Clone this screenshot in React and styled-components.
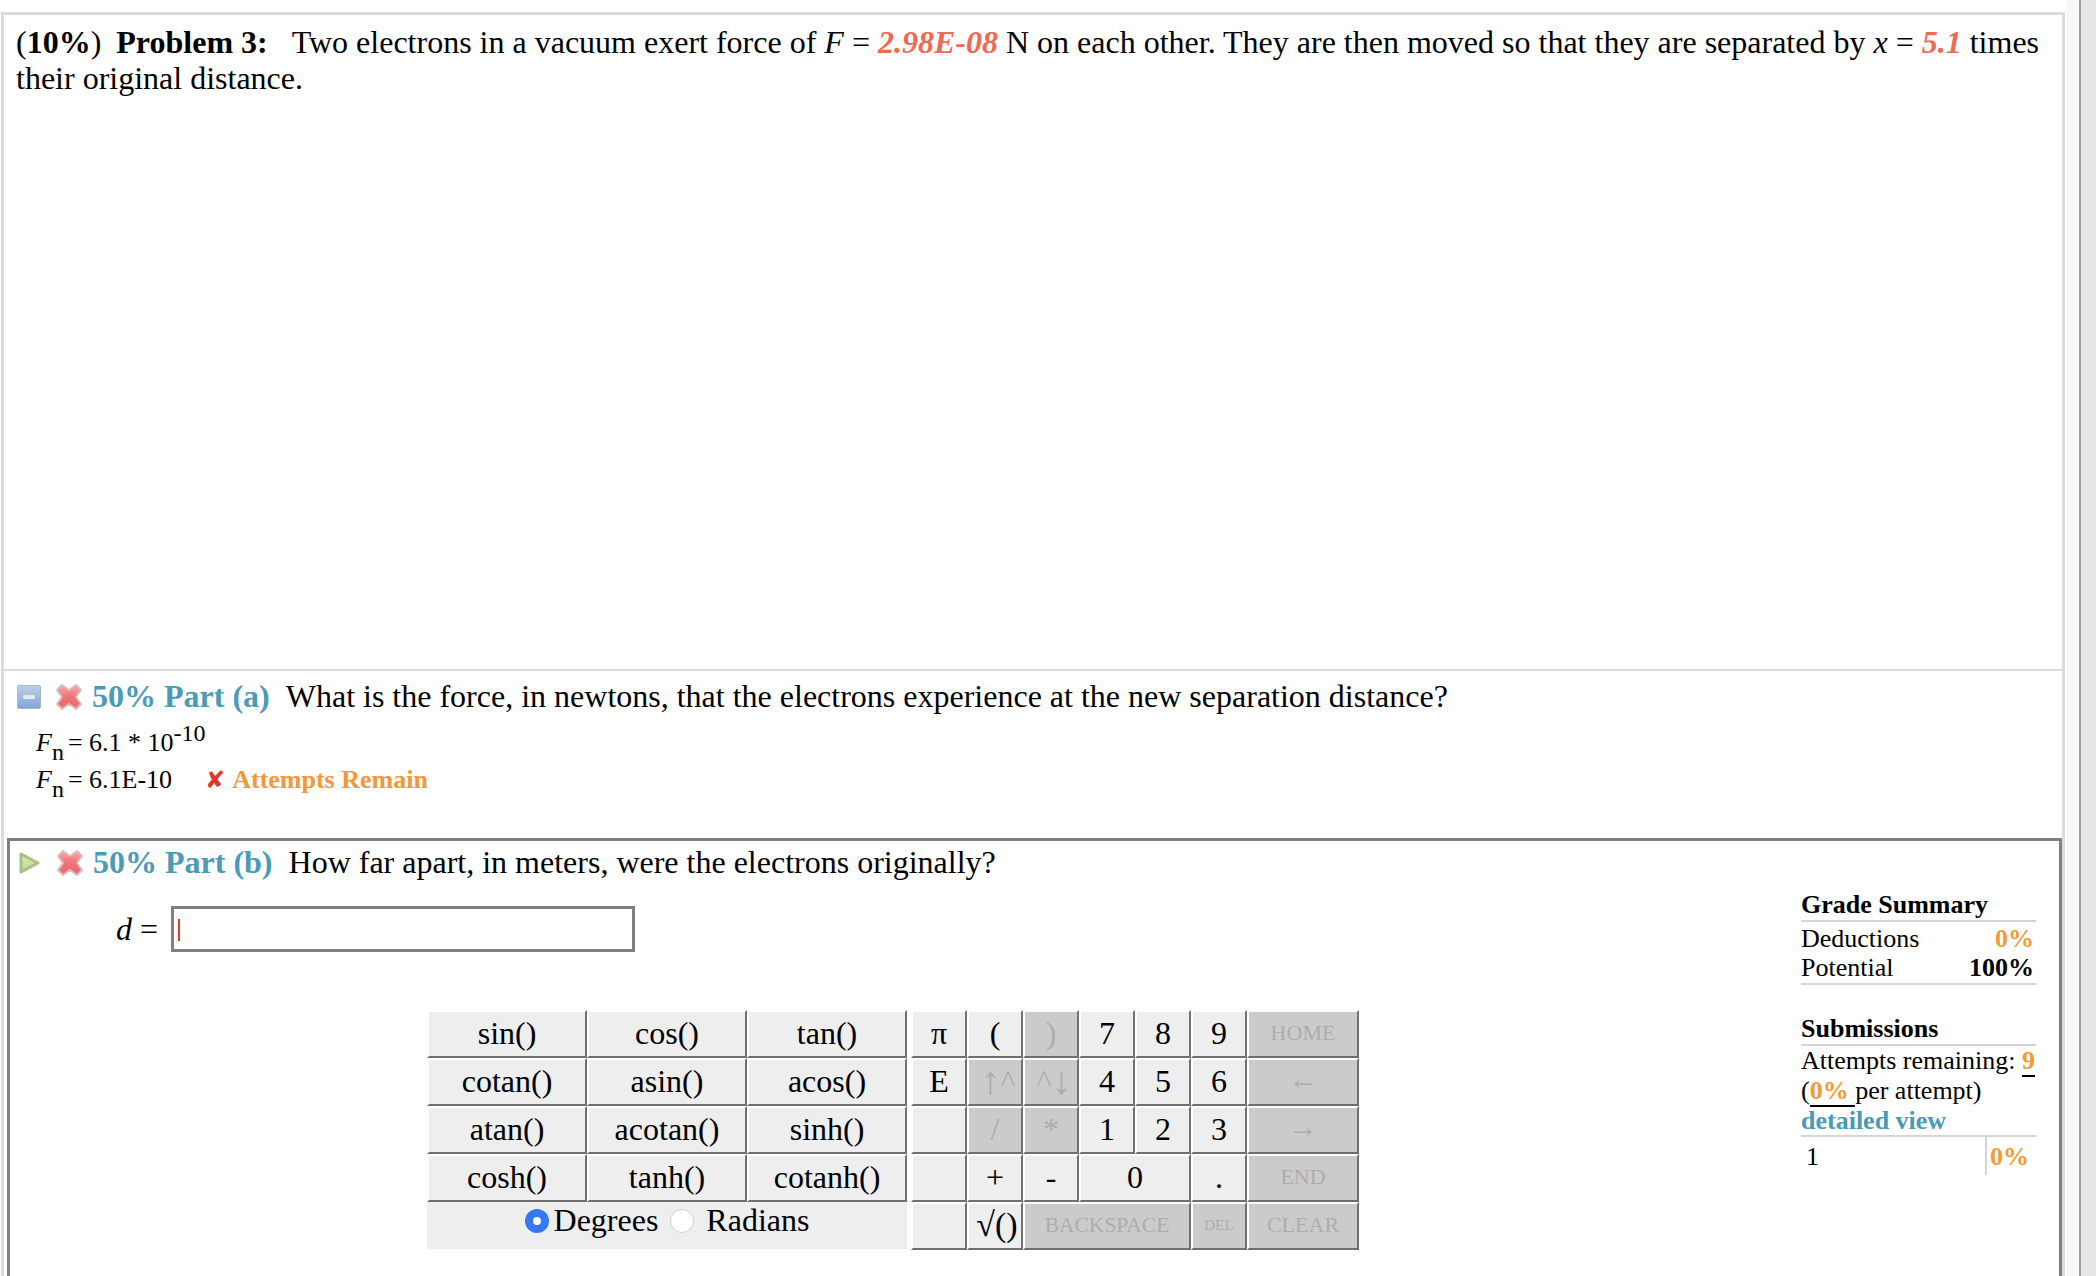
import React from 'react'
import styled, { createGlobalStyle } from 'styled-components'

const GlobalStyle = createGlobalStyle`
  html, body {
    margin: 0;
    background: #fff;
    overflow: hidden;
  }
  body {
    font-family: "Liberation Serif", "Times New Roman", serif;
    color: #000;
  }
`

const Page = styled.div`
  display: flex;
  height: 1276px;
  overflow: hidden;
`
const Main = styled.div`
  flex: 1;
  min-width: 0;
  padding: 12px 14px 0 1px;
  background: linear-gradient(to right, #fff 2066px, #f8f8f8 2066px);
`
const ScrollTrack = styled.div`
  width: 15px;
  background: #e7e7e9;
  border-left: 2px solid #a0a0a0;
`
const Sheet = styled.div`
  border: 3px solid #dcdcdc;
  border-bottom: 0;
  height: 1270px;
`
const Statement = styled.div`
  height: 656px;
  padding: 9px 12px 0;
  font-size: 32px;
  line-height: 36px;
  box-sizing: border-box;
  border-bottom: 2px solid #dcdcdc;
`
const Label = styled.span`
  font-weight: bold;
`
const Heading = styled(Label)`
  margin: 0 24px 0 7px;
`
const Given = styled.span`
  color: #ee6a53;
  font-weight: bold;
  font-style: italic;
`
const Var = styled.i``
const PartA = styled.div`
  height: 167px;
  padding: 5px 0 0 12px;
  box-sizing: border-box;
`
const PartHead = styled.div`
  display: flex;
  align-items: center;
  height: 40px;
  font-size: 32px;
  margin-bottom: 8px;
  svg {
    margin-top: 2px;
    filter: blur(0.4px);
  }
`
const ToggleSlot = styled.div`
  width: 38px;
  display: flex;
`
const CrossSlot = styled.div`
  width: 38px;
  display: flex;
`
const PartTitle = styled.span`
  color: #4a9ab9;
  font-weight: bold;
  margin-right: 16px;
`
const AnswerRow = styled.div`
  display: flex;
  align-items: baseline;
  font-size: 26px;
  height: 37px;
  line-height: 37px;
  padding-left: 20px;
`
const Sub = styled.sub`
  font-size: 24px;
  line-height: 0;
  vertical-align: -9px;
  margin-right: 4px;
`
const Sup = styled.sup`
  font-size: 24px;
  line-height: 0;
  vertical-align: 10px;
`
const Status = styled.span`
  display: inline-flex;
  align-items: baseline;
  gap: 7px;
  margin-left: 33px;
  color: #f59637;
  font-weight: bold;
`
const WrongMark = styled.span`
  color: #e8352a;
  font-family: "DejaVu Sans", sans-serif;
  font-size: 24px;
  font-weight: normal;
`
const PartB = styled.div`
  display: flex;
  margin: 0 0 0 3px;
  border: 3px solid #808080;
  height: 600px;
  box-sizing: border-box;
`
const Work = styled.div`
  flex: 1;
  min-width: 0;
`
const PartBHead = styled(PartHead)`
  margin-bottom: 0;
  padding: 1px 0 0 8px;
  & > div:first-child {
    width: 37px;
  }
`
const EntryRow = styled.div`
  display: flex;
  align-items: center;
  margin-top: 24px;
`
const EntryLabel = styled.div`
  width: 148px;
  text-align: right;
  font-size: 32px;
  margin-right: 13px;
`
const Entry = styled.div`
  width: 464px;
  height: 46px;
  box-sizing: border-box;
  border: 3px solid #808080;
  display: flex;
  align-items: center;
  padding-left: 4px;
`
const Caret = styled.div`
  width: 2px;
  height: 22px;
  margin-top: 2px;
  background: #e8352a;
`
const Calculator = styled.div`
  display: flex;
  margin: 58px 0 0 417px;
  gap: 4px;
`
const FunctionPad = styled.div`
  display: grid;
  grid-template-columns: repeat(3, 160px);
  grid-auto-rows: 48px;
`
const KeyPad = styled.div`
  display: grid;
  grid-template-columns: repeat(6, 56px) 112px;
  grid-auto-rows: 48px;
`
const Key = styled.div`
  box-sizing: border-box;
  display: flex;
  align-items: center;
  justify-content: center;
  grid-column: span ${(p) => p.$span || 1};
  padding-bottom: ${(p) => p.$lift || 2}px;
  padding-left: ${(p) => p.$nudge || 0}px;
  background: ${(p) => (p.$off ? '#cbcbcb' : '#eeeeee')};
  color: ${(p) => (p.$off ? '#adadad' : '#000')};
  font-size: ${(p) => p.$size || 32}px;
  border-top: 2px solid #fff;
  border-left: 2px solid #fff;
  border-right: 2px solid #707070;
  border-bottom: 2px solid #707070;
  white-space: nowrap;
`
const TallArrow = styled.span`
  font-size: 40px;
  line-height: 0;
`
const AngleRow = styled.div`
  grid-column: span 3;
  display: flex;
  align-items: flex-start;
  justify-content: center;
  background: #eeeeee;
  font-size: 32px;
  height: 47px;
`
const Radio = styled.span`
  width: 24px;
  height: 24px;
  margin: 7px 5px 0 0;
  border-radius: 50%;
  box-sizing: border-box;
  background: #fff;
  border: ${(p) => (p.$on ? '8px solid #3478f6' : '1px solid #cfcfcf')};
`
const Blank = styled.span`
  display: inline-block;
  width: ${(p) => p.$w}px;
`
const Aside = styled.aside`
  width: 235px;
  margin-right: 23px;
  padding-top: 49px;
  font-size: 26px;
  line-height: 30px;
`
const AsideTitle = styled.div`
  font-weight: bold;
  border-bottom: 2px solid #d5d5d5;
`
const AsideRow = styled.div`
  display: flex;
  justify-content: space-between;
  padding-right: 2px;
  line-height: 29px;
`
const Orange = styled.span`
  color: #f59a35;
  font-weight: bold;
`
const GradeBlock = styled.div`
  border-bottom: 2px solid #d5d5d5;
  margin-bottom: 29px;
  padding: 2px 0 1px;
`
const Underlined = styled.span`
  border-bottom: 2px solid #000;
`
const DetailLink = styled.div`
  color: #4a9ab9;
  font-weight: bold;
  border-bottom: 2px solid #d5d5d5;
  line-height: 29px;
`
const AttemptRow = styled.div`
  display: flex;
  height: 38px;
  line-height: 40px;
`
const AttemptNo = styled.div`
  width: 186px;
  padding-left: 5px;
  box-sizing: border-box;
  border-right: 2px solid #d5d5d5;
`
const AttemptPct = styled(Orange)`
  padding-left: 3px;
`

function ToggleMinus() {
  return (
    <svg width="26" height="26" viewBox="0 0 26 26">
      <defs>
        <linearGradient id="minusFill" x1="0" y1="0" x2="0" y2="1">
          <stop offset="0" stopColor="#bccfe8" />
          <stop offset="1" stopColor="#7fa6d7" />
        </linearGradient>
      </defs>
      <rect x="1.5" y="1.5" width="23" height="23" rx="1.5" fill="url(#minusFill)" stroke="#a6bad6" />
      <rect x="7" y="11" width="12" height="4" rx="1.5" fill="#e2eaf5" />
    </svg>
  )
}

function TogglePlay() {
  return (
    <svg width="24" height="26" viewBox="0 0 24 26">
      <defs>
        <linearGradient id="playFill" x1="0" y1="0" x2="0" y2="1">
          <stop offset="0" stopColor="#dcebb4" />
          <stop offset="1" stopColor="#bcd88c" />
        </linearGradient>
      </defs>
      <path d="M3 4 L20 13 L3 22 Z" fill="url(#playFill)" stroke="#a8bf86" strokeWidth="3" strokeLinejoin="round" />
    </svg>
  )
}

function SoftCross({ id }) {
  return (
    <svg width="30" height="30" viewBox="0 0 30 30">
      <defs>
        <linearGradient id={id} x1="0" y1="0" x2="0" y2="1">
          <stop offset="0" stopColor="#f6a9aa" />
          <stop offset="0.5" stopColor="#ee7477" />
          <stop offset="1" stopColor="#e9666b" />
        </linearGradient>
      </defs>
      <path
        d="M8 3 L15 8 L22 3 L27 8 L22 15 L27 22 L22 27 L15 22 L8 27 L3 22 L8 15 L3 8 Z"
        fill={`url(#${id})`}
        stroke="#ddbcbc"
        strokeWidth="2"
        strokeLinejoin="round"
      />
    </svg>
  )
}

const functionKeys = ['sin()', 'cos()', 'tan()', 'cotan()', 'asin()', 'acos()', 'atan()', 'acotan()', 'sinh()', 'cosh()', 'tanh()', 'cotanh()']

const padKeys = [
  { text: 'π' },
  { text: '(' },
  { text: ')', off: true },
  { text: '7' },
  { text: '8' },
  { text: '9' },
  { text: 'HOME', off: true, size: 22 },
  { text: 'E' },
  { text: <><TallArrow>↑</TallArrow>^</>, off: true, nudge: 6 },
  { text: <>^<TallArrow>↓</TallArrow></>, off: true, nudge: 6 },
  { text: '4' },
  { text: '5' },
  { text: '6' },
  { text: '←', off: true, size: 30, lift: 6 },
  { text: '' },
  { text: '/', off: true },
  { text: '*', off: true },
  { text: '1' },
  { text: '2' },
  { text: '3' },
  { text: '→', off: true, size: 30, lift: 6 },
  { text: '' },
  { text: '+' },
  { text: '-' },
  { text: '0', span: 2 },
  { text: '.' },
  { text: 'END', off: true, size: 22 },
  { text: '' },
  { text: '√()', size: 34, nudge: 4 },
  { text: 'BACKSPACE', off: true, span: 3, size: 21.5 },
  { text: 'DEL', off: true, size: 15.5 },
  { text: 'CLEAR', off: true, size: 22 },
]

export default function App() {
  return (
    <Page>
      <GlobalStyle />
      <Main>
        <Sheet>
          <Statement>
            (<Label>10%</Label>)<Heading> Problem 3:</Heading>Two electrons in a vacuum exert force of <Var>F</Var> ={' '}
            <Given>2.98E-08</Given> N on each other. They are then moved so that they are separated by <Var>x</Var> ={' '}
            <Given>5.1</Given> times their original distance.
          </Statement>
          <PartA>
            <PartHead>
              <ToggleSlot>
                <ToggleMinus />
              </ToggleSlot>
              <CrossSlot>
                <SoftCross id="crossA" />
              </CrossSlot>
              <PartTitle>50% Part (a)</PartTitle>
              What is the force, in newtons, that the electrons experience at the new separation distance?
            </PartHead>
            <AnswerRow>
              <span>
                <Var>F</Var>
                <Sub>n</Sub>= 6.1 * 10<Sup>-10</Sup>
              </span>
            </AnswerRow>
            <AnswerRow>
              <span>
                <Var>F</Var>
                <Sub>n</Sub>= 6.1E-10
              </span>
              <Status>
                <WrongMark>✘</WrongMark>
                Attempts Remain
              </Status>
            </AnswerRow>
          </PartA>
          <PartB>
            <Work>
              <PartBHead>
                <ToggleSlot>
                  <TogglePlay />
                </ToggleSlot>
                <CrossSlot>
                  <SoftCross id="crossB" />
                </CrossSlot>
                <PartTitle>50% Part (b)</PartTitle>
                How far apart, in meters, were the electrons originally?
              </PartBHead>
              <EntryRow>
                <EntryLabel>
                  <Var>d</Var> =
                </EntryLabel>
                <Entry>
                  <Caret />
                </Entry>
              </EntryRow>
              <Calculator>
                <FunctionPad>
                  {functionKeys.map((name) => (
                    <Key key={name}>{name}</Key>
                  ))}
                  <AngleRow>
                    <Radio $on />
                    Degrees
                    <Blank $w={12} />
                    <Radio />
                    <Blank $w={7} />
                    Radians
                  </AngleRow>
                </FunctionPad>
                <KeyPad>
                  {padKeys.map(({ text, off, span, size, lift, nudge }, i) => (
                    <Key key={i} $off={off} $span={span} $size={size} $lift={lift} $nudge={nudge}>
                      {text}
                    </Key>
                  ))}
                </KeyPad>
              </Calculator>
            </Work>
            <Aside>
              <AsideTitle>Grade Summary</AsideTitle>
              <GradeBlock>
                <AsideRow>
                  Deductions <Orange>0%</Orange>
                </AsideRow>
                <AsideRow>
                  Potential <Label>100%</Label>
                </AsideRow>
              </GradeBlock>
              <AsideTitle>Submissions</AsideTitle>
              <div>
                Attempts remaining: <Underlined><Orange>9</Orange></Underlined>
              </div>
              <div>
                (<Underlined><Orange>0%</Orange>{' '}</Underlined>per attempt)
              </div>
              <DetailLink>detailed view</DetailLink>
              <AttemptRow>
                <AttemptNo>1</AttemptNo>
                <AttemptPct>0%</AttemptPct>
              </AttemptRow>
            </Aside>
          </PartB>
        </Sheet>
      </Main>
      <ScrollTrack />
    </Page>
  )
}
